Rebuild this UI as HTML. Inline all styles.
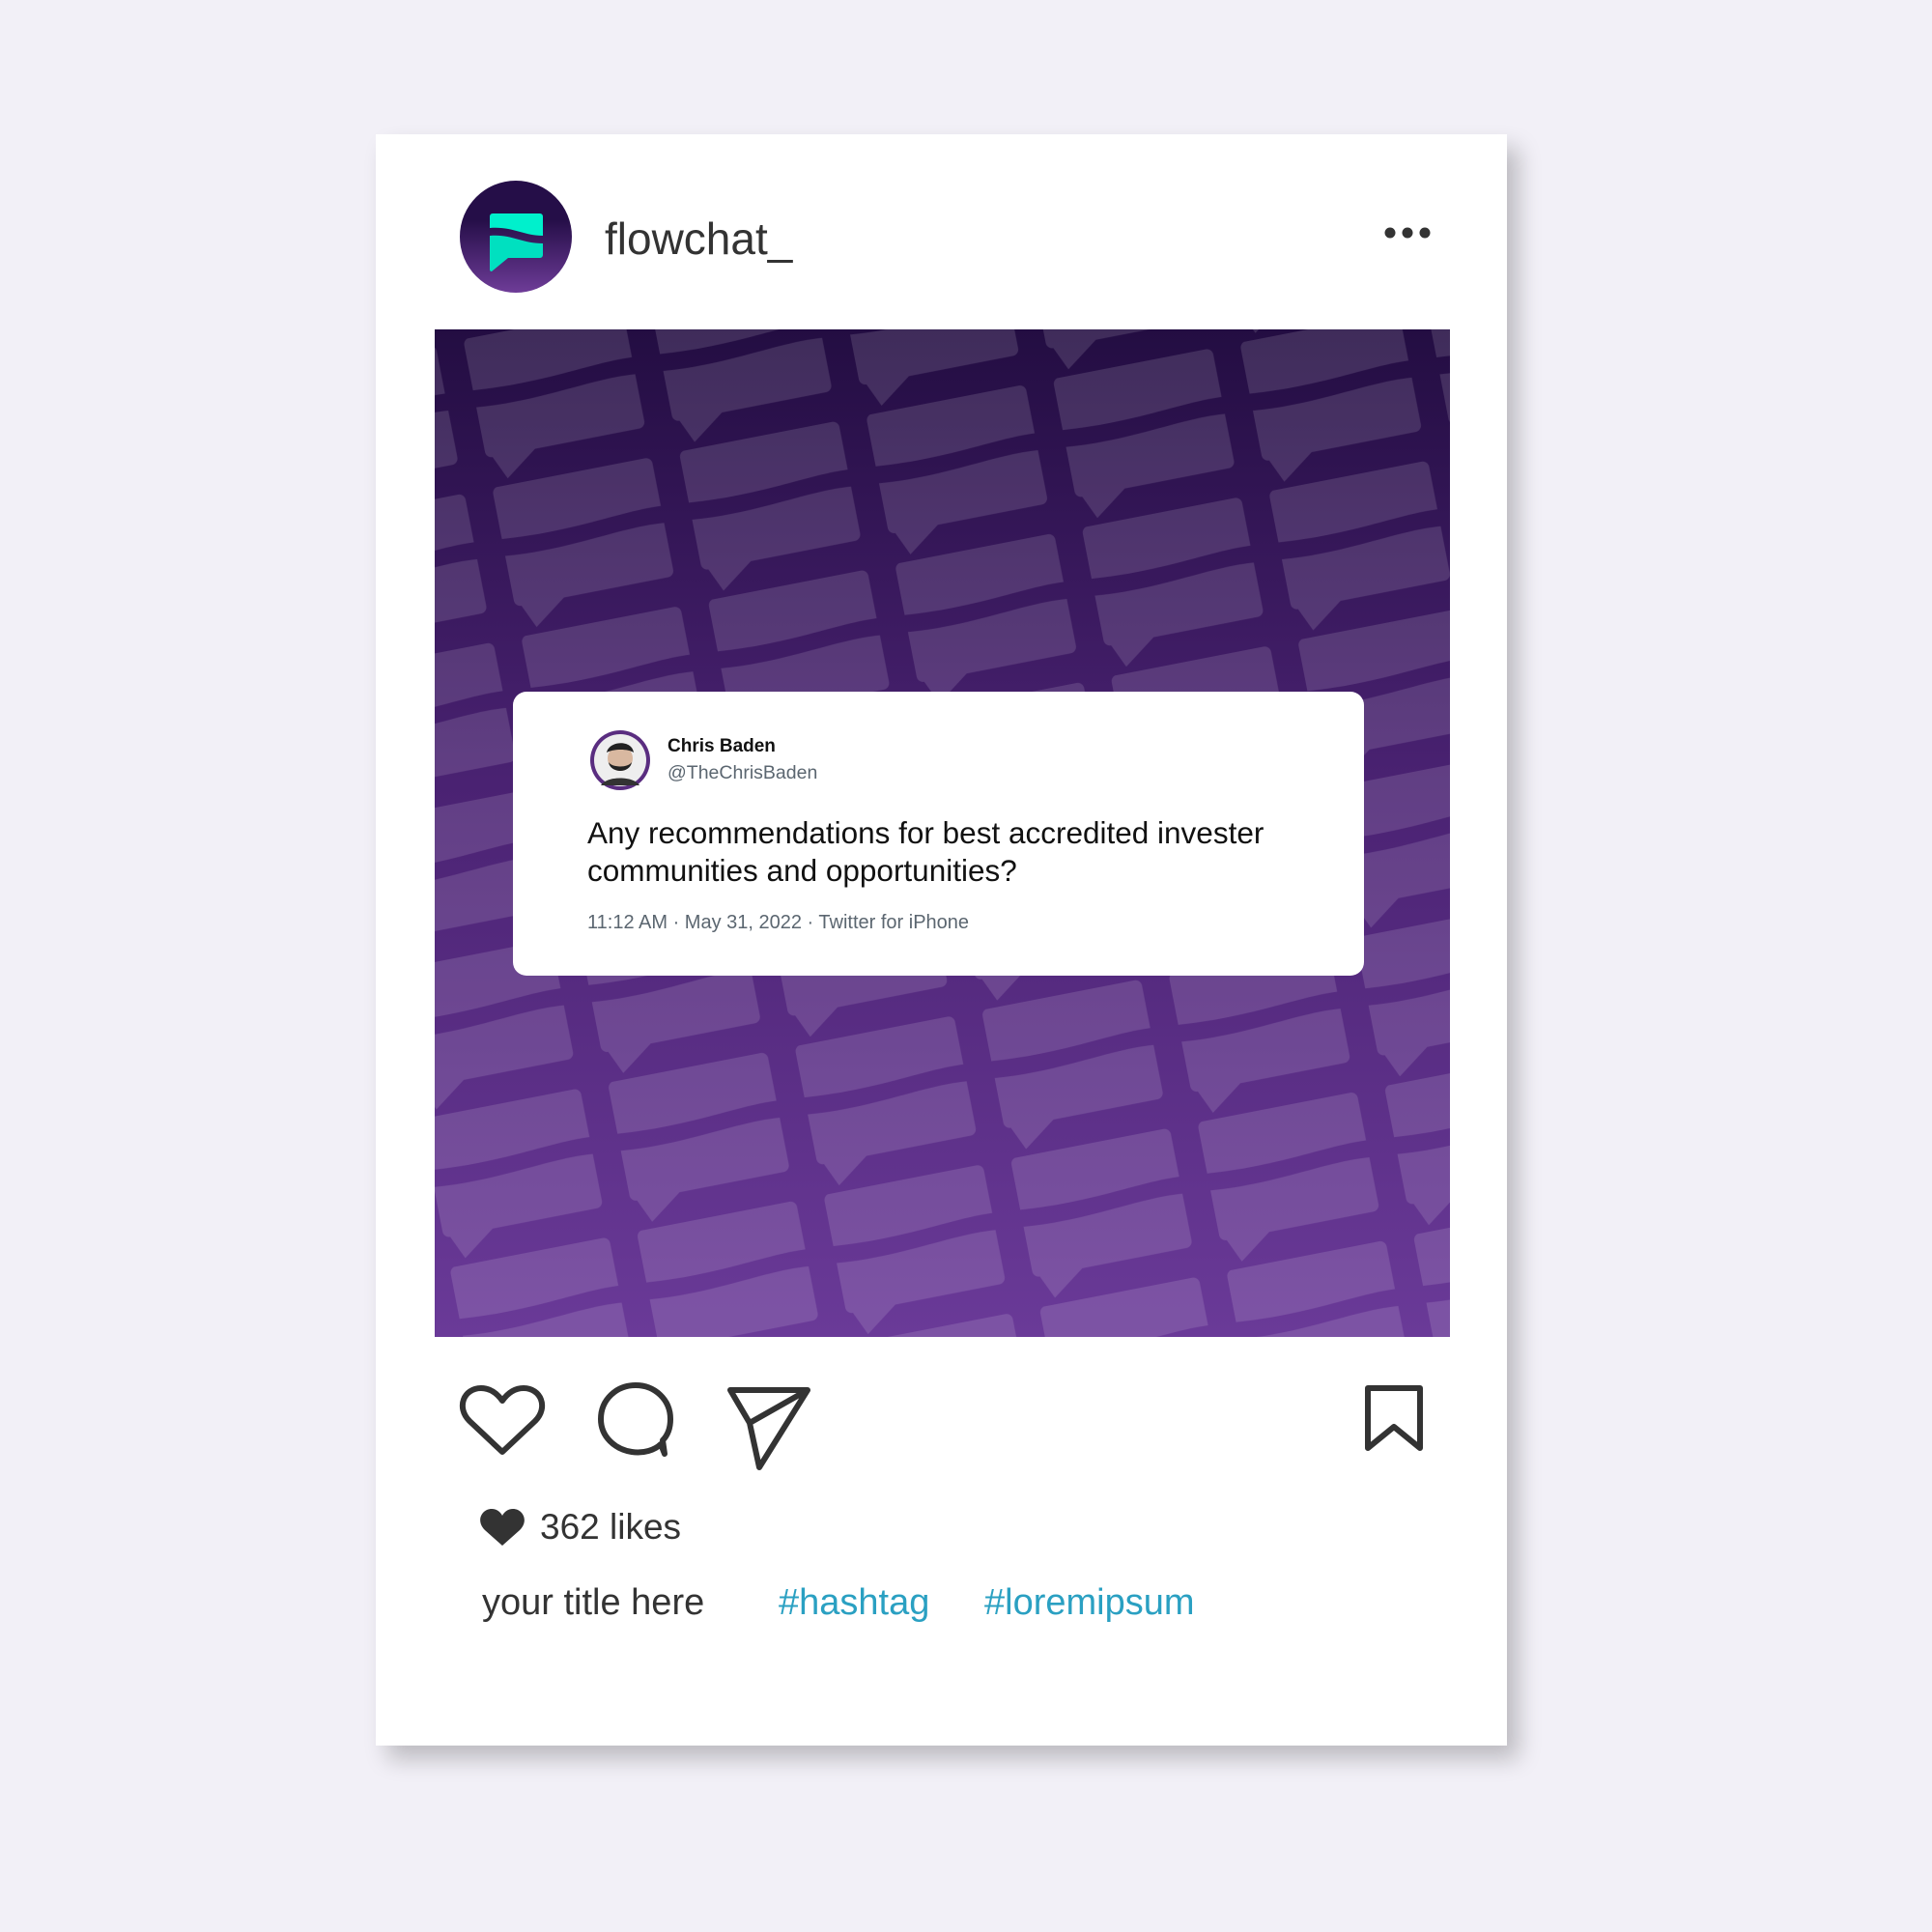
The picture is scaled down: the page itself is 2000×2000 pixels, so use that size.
<!DOCTYPE html>
<html><head><style>
body{margin:0;width:2000px;height:2000px;background:#f2f0f7;position:relative;font-family:"Liberation Sans",sans-serif;overflow:hidden}
.card{position:absolute;left:389px;top:139px;width:1171px;height:1668px;background:#fff;box-shadow:12px 14px 22px rgba(0,0,0,.22)}
.abs{position:absolute}
</style></head><body>
<div class="card"></div>
<svg class="abs" style="left:476px;top:187px" width="116" height="116" viewBox="0 0 116 116">
<defs><linearGradient id="lg" x1="0" y1="0" x2="0" y2="1"><stop offset=".35" stop-color="#250e48"/><stop offset="1" stop-color="#6e3c98"/></linearGradient></defs>
<circle cx="58" cy="58" r="58" fill="url(#lg)"/>
<path d="M31 37a3 3 0 0 1 3-3h49a3 3 0 0 1 3 3v20c-20 0-32-10-55-8z" fill="#00f0cc"/>
<path d="M31 57c22-2 33 8 55 8v12a3 3 0 0 1-3 3H50l-17 14a2 2 0 0 1-2-2z" fill="#00e0c0"/>
</svg>
<div class="abs" style="left:626px;top:220px;font-size:46px;color:#333">flowchat_</div>
<svg class="abs" style="left:1432px;top:233px" width="50" height="16"><circle cx="7" cy="8" r="5.5" fill="#333"/><circle cx="25" cy="8" r="5.5" fill="#333"/><circle cx="43" cy="8" r="5.5" fill="#333"/></svg>
<svg class="abs" style="left:450px;top:341px" width="1051" height="1043">
<defs>
<linearGradient id="bg" x1="0" y1="0" x2="0" y2="1"><stop offset="0" stop-color="#230d42"/><stop offset=".45" stop-color="#4a2272"/><stop offset="1" stop-color="#6a3a98"/></linearGradient>
<pattern id="p" width="176" height="140" patternUnits="userSpaceOnUse" patternTransform="rotate(-11) scale(1.12) translate(20 10)">
<path d="M8 4h140a6 6 0 0 1 6 6v40c-40-2-80 8-150 2v-42a6 6 0 0 1 4-6z" fill="#fff" fill-opacity=".13"/>
<path d="M4 68c60 6 110-6 150-2v44a6 6 0 0 1-6 6H50l-30 22-10-22H10a6 6 0 0 1-6-6z" fill="#fff" fill-opacity=".13"/>
</pattern>
</defs>
<rect width="1051" height="1043" fill="url(#bg)"/>
<rect width="1051" height="1043" fill="url(#p)"/>
</svg>
<div class="abs" style="left:531px;top:716px;width:881px;height:294px;background:#fff;border-radius:14px"></div>
<svg class="abs" style="left:610px;top:755px" width="64" height="64"><circle cx="32" cy="32" r="31" fill="#5a2d80"/><circle cx="32" cy="32" r="27" fill="#eee"/><circle cx="32" cy="30" r="13" fill="#d9b8a0"/><path d="M18 24c2-12 26-14 28 0c-6-4-20-4-28 0z" fill="#222"/><path d="M20 34c2 12 22 12 24 0c-4 6-20 6-24 0z" fill="#222"/><path d="M12 58c6-10 34-10 40 0z" fill="#333"/></svg>
<div class="abs" style="left:691px;top:762px;font-size:19px;font-weight:bold;color:#111">Chris Baden</div>
<div class="abs" style="left:691px;top:789px;font-size:19.5px;color:#5b6670">@TheChrisBaden</div>
<div class="abs" style="left:608px;top:843px;font-size:31.5px;line-height:39px;color:#111">Any recommendations for best accredited invester<br>communities and opportunities?</div>
<div class="abs" style="left:608px;top:944px;font-size:20px;color:#5b6670">11:12 AM · May 31, 2022 · Twitter for iPhone</div>
<svg class="abs" style="left:470px;top:1425px" width="1050" height="100" fill="none" stroke="#333" stroke-width="6" stroke-linejoin="round">
<path d="M50 78L16 46C2 32 10 12 28 12c10 0 17 6 22 13c5-7 12-13 22-13c18 0 26 20 12 34z"/>
<path d="M214 70c-6 6-18 10-30 8c-18-3-32-16-32-34c0-20 16-35 36-35s36 15 36 35c0 10-3 17-8 22l2 14z"/>
<path d="M286 14h80l-50 80-10-46zM306 48l60-34"/>
<path d="M946 12h54v62l-27-22-27 22z"/>
</svg>
<svg class="abs" style="left:496px;top:1561px" width="48" height="40"><path d="M24 39L6 23C-4 13 3 1 13 1c5 0 9 3 11 7c2-4 6-7 11-7c10 0 17 12 7 22z" fill="#333"/></svg>
<div class="abs" style="left:559px;top:1560px;font-size:37px;color:#333">362 likes</div>
<div class="abs" style="left:499px;top:1638px;font-size:38px;color:#333">your title here</div>
<div class="abs" style="left:806px;top:1638px;font-size:38px;color:#2aa0c2">#hashtag</div>
<div class="abs" style="left:1019px;top:1638px;font-size:38px;color:#2aa0c2">#loremipsum</div>
</body></html>
